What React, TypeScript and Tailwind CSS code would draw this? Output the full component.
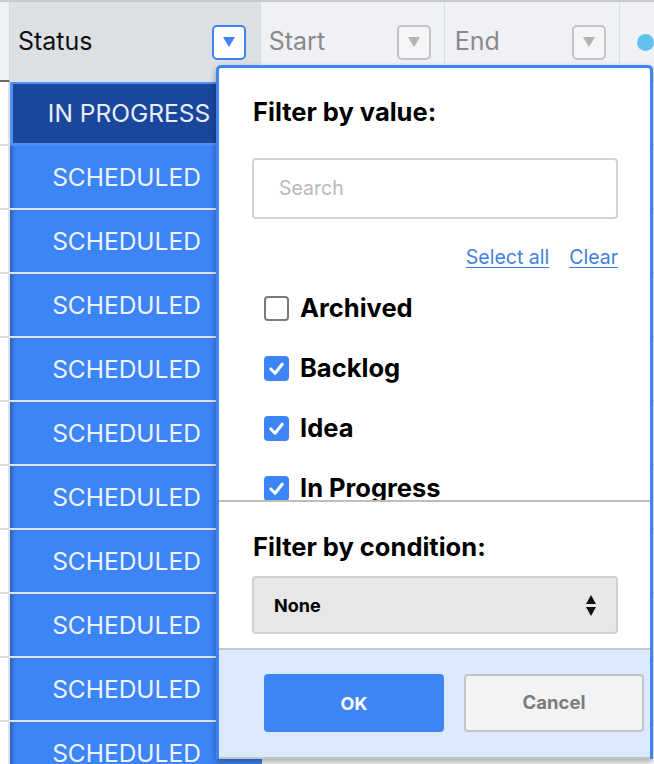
import React from 'react';

const font = { fontFamily: 'Inter, Lato, "Open Sans", Arial, sans-serif' };

function Caret({ color }: { color: string }) {
  return (
    <svg width="14" height="12" viewBox="0 0 14 12">
      <polygon points="1,1 13,1 7,11" fill={color} />
    </svg>
  );
}

function HeaderCell({
  label,
  width,
  active,
  padLeft,
}: {
  label: string;
  width: string;
  active?: boolean;
  padLeft: string;
}) {
  return (
    <div
      className={`${width} ${padLeft} h-full flex items-center justify-between border-r border-[#dadde2] ${
        active ? 'bg-[#dcdfe3] pr-[14px]' : 'bg-[#eff1f4] pr-[13px]'
      }`}
    >
      <span className={`text-[25px] ${active ? 'text-[#111]' : 'text-[#8a8a8a]'}`}>{label}</span>
      <div
        className={`w-[34px] h-[35px] rounded-[5px] border-2 flex items-center justify-center ${
          active ? 'border-[#3d84f7] bg-white' : 'border-[#c4c4c4] bg-[#f4f5f7]'
        }`}
      >
        <Caret color={active ? '#3d84f7' : '#b3b3b3'} />
      </div>
    </div>
  );
}

function CheckRow({ label, checked }: { label: string; checked?: boolean }) {
  return (
    <div className="h-[60px] shrink-0 flex items-center gap-[11px] pl-[45px]">
      {checked ? (
        <div className="w-[25px] h-[25px] rounded-[4px] bg-[#3d84f7] flex items-center justify-center shrink-0">
          <svg width="19" height="19" viewBox="0 0 20 20">
            <path d="M4 10.5 L8.5 15 L16 5.5" fill="none" stroke="white" strokeWidth="3.2" strokeLinecap="round" strokeLinejoin="round" />
          </svg>
        </div>
      ) : (
        <div className="w-[25px] h-[25px] rounded-[4px] border-2 border-[#7a7a7a] bg-white shrink-0" />
      )}
      <span className="text-[25.5px] font-bold text-black leading-none">{label}</span>
    </div>
  );
}

export default function App() {
  const rows = ['IN PROGRESS', ...Array(10).fill('SCHEDULED')];

  return (
    <div className="relative w-[654px] h-[764px] overflow-hidden bg-white" style={font}>
      {/* Header */}
      <div className="h-[82px] flex border-t-2 border-[#c9cbce]">
        <div className="w-[10px] h-full bg-[#eff1f4] border-r border-[#d5d8dc] border-b-2 border-b-[#6b6b6b]" />
        <HeaderCell label="Status" width="w-[252px]" padLeft="pl-[8px]" active />
        <HeaderCell label="Start" width="w-[185px]" padLeft="pl-[8px]" />
        <HeaderCell label="End" width="w-[176px]" padLeft="pl-[10px]" />
        <div className="flex-1 h-full bg-[#eff1f4] flex items-center pl-[17px]">
          <div className="w-[17px] h-[17px] rounded-full bg-[#62c0ef] shrink-0" />
        </div>
      </div>

      {/* Body rows */}
      <div className="flex flex-col">
        {rows.map((r, i) => (
          <div key={i} className="flex h-[64px]">
            <div className="w-[10px] h-full bg-white border-r-2 border-[#dfe1e4] border-b-2 border-b-[#dcdcdc]" />
            {i === 0 ? (
              <div className="w-[252px] h-full pr-[19px] bg-[#4f8ff7] p-[3px] pt-[2px]">
                <div className="w-full h-full bg-[#1a479c] flex items-center justify-center text-[24.5px] text-[#e8eefb] pl-[2px]">
                  {r}
                </div>
              </div>
            ) : (
              <div className="w-[252px] h-full pr-[19px] bg-[#3d84f7] border-b-2 border-[#dfe4ec] flex items-center justify-center text-[24.5px] text-[#eef3fc] shadow-[inset_5px_0_4px_-3px_rgba(0,0,40,0.35)]">
                {r}
              </div>
            )}
            <div className="flex-1 h-full bg-white border-b-2 border-[#dcdcdc]" />
          </div>
        ))}
      </div>

      {/* Filter popup */}
      <div className="absolute left-[216px] top-[65px] w-[437px] h-[694px] flex flex-col bg-white border-[3px] border-b-0 border-[#3d84f7] rounded-t-[5px] shadow-[0_3px_6px_rgba(0,0,0,0.35)]">
        <div className="h-[432px] shrink-0 overflow-hidden flex flex-col pt-[28px]">
          <div className="h-[32px] shrink-0 flex items-center pl-[34px] text-[25.5px] font-bold text-black">
            Filter by value:
          </div>
          <div className="mt-[30px] ml-[33px] mr-[32px] h-[61px] shrink-0 rounded-[4px] border-2 border-[#d2d2d2] flex items-center pl-[25px] text-[19.5px] text-[#b8b8b8]">
            Search
          </div>
          <div className="mt-[27px] h-[24px] shrink-0 flex items-center justify-end gap-[20px] pr-[32px] text-[19.5px] text-[#3f7fdf]">
            <span className="underline underline-offset-[3px]">Select all</span>
            <span className="underline underline-offset-[3px]">Clear</span>
          </div>
          <div className="mt-[8px] flex flex-col">
            <CheckRow label="Archived" />
            <CheckRow label="Backlog" checked />
            <CheckRow label="Idea" checked />
            <CheckRow label="In Progress" checked />
          </div>
        </div>
        <div className="h-[2px] shrink-0 bg-[#bdbdbd]" />
        <div className="h-[146px] shrink-0 flex flex-col pt-[29px]">
          <div className="h-[32px] flex items-center pl-[34px] text-[25.5px] font-bold text-black">
            Filter by condition:
          </div>
          <div className="mt-[13px] ml-[33px] mr-[32px] h-[58px] rounded-[4px] border-2 border-[#d0d0d0] bg-[#e7e7e7] flex items-center justify-between pl-[20px] pr-[20px]">
            <span className="text-[18px] font-bold text-black">None</span>
            <div className="flex flex-col items-center gap-[3px]">
              <svg width="10" height="9" viewBox="0 0 10 9">
                <polygon points="5,0 10,9 0,9" fill="#111" />
              </svg>
              <svg width="10" height="9" viewBox="0 0 10 9">
                <polygon points="0,0 10,0 5,9" fill="#111" />
              </svg>
            </div>
          </div>
        </div>
        <div className="flex-1 bg-[#dce8fc] border-t-2 border-[#c3c8d0] border-b-2 border-b-[#bfc3ca] flex items-start pt-[24px] pl-[45px] gap-[20px]">
          <div className="w-[180px] h-[58px] rounded-[4px] bg-[#3d84f7] flex items-center justify-center text-[18px] font-bold text-white">
            OK
          </div>
          <div className="w-[180px] h-[58px] rounded-[4px] bg-[#f2f3f5] border-2 border-[#c4c4c4] flex items-center justify-center text-[18.5px] font-bold text-[#7b7b7b]">
            Cancel
          </div>
        </div>
      </div>
    </div>
  );
}
